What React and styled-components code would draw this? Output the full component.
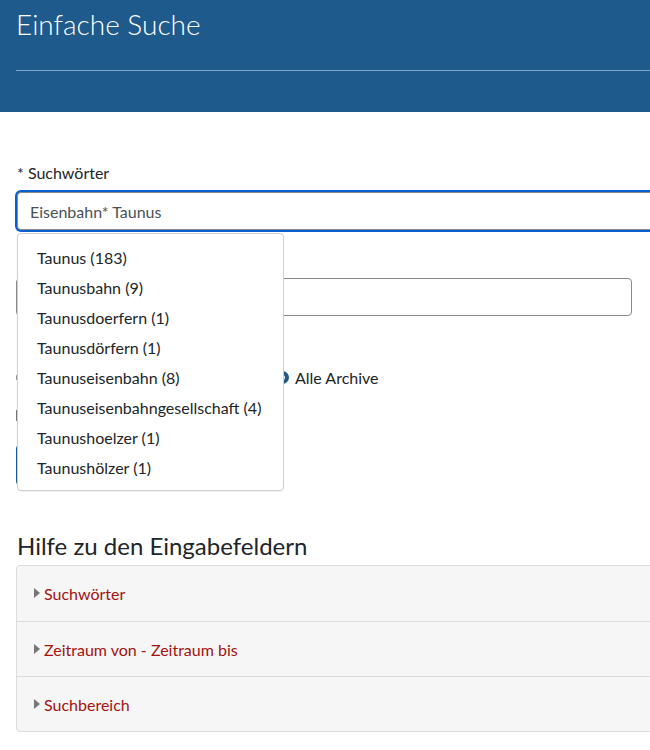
import React from "react";
import styled, { createGlobalStyle } from "styled-components";

const Global = createGlobalStyle`
  html, body { margin: 0; padding: 0; background: #fff; overflow: hidden; }
  body { font-family: "Segoe UI", Lato, "Noto Sans", sans-serif; color: #212529; }
  * { box-sizing: border-box; }
`;

const Page = styled.div`
  width: 720px;
`;

const Header = styled.header`
  background: #1f5a8c;
  height: 112px;
  padding: 6px 0 0 16px;
`;

const Title = styled.h1`
  margin: 0;
  font-weight: 300;
  font-size: 28px;
  line-height: 36px;
  color: #fff;
`;

const Rule = styled.hr`
  margin: 28px 0 0;
  border: 0;
  border-top: 1px solid #7fa6cf;
`;

const Main = styled.main`
  padding: 50px 0 0 16px;
`;

const Form = styled.form`
  position: relative;
  display: flex;
  flex-direction: column;
`;

const Label = styled.label`
  display: block;
  font-size: 16px;
  line-height: 22px;
  margin: 0 0 ${(p) => p.$mb || 8}px 1px;
`;

const Input = styled.input`
  display: block;
  width: ${(p) => p.$w || 704}px;
  height: 38px;
  border: 1px solid #8a8a8a;
  border-radius: 4px;
  padding: 0 12px;
  font: inherit;
  font-size: 16px;
  color: #495057;
  background: #fff;
  margin-left: ${(p) => (p.$focus ? 1 : 0)}px;
  box-shadow: ${(p) => (p.$focus ? "0 0 0 2px #0b5fd1" : "none")};
  outline: none;
`;

const Field = styled.div`
  margin-bottom: ${(p) => p.$mb || 0}px;
`;

const RadioRow = styled.div`
  display: flex;
  align-items: center;
  height: 22px;
  margin-top: 50px;
  font-size: 16px;
`;

const RadioItem = styled.label`
  display: flex;
  align-items: center;
  gap: 6px;
  width: ${(p) => p.$w || "auto"};
`;

const Radio = styled.span`
  width: 13px;
  height: 13px;
  border-radius: 50%;
  border: ${(p) => (p.$checked ? "4px solid #1f5a8c" : "1px solid #777")};
  background: #fff;
  flex: none;
`;

const CheckRow = styled.div`
  display: flex;
  align-items: center;
  gap: 6px;
  height: 22px;
  margin-top: 16px;
  font-size: 16px;
`;

const Box = styled.span`
  width: 13px;
  height: 13px;
  border: 1px solid #777;
  border-radius: 2px;
  flex: none;
`;

const Button = styled.button`
  align-self: flex-start;
  margin-top: 19px;
  height: 40px;
  width: 160px;
  background: #1f5a8c;
  color: #fff;
  border: 0;
  border-radius: 4px;
  font: inherit;
  font-size: 16px;
`;

const Dropdown = styled.ul`
  position: absolute;
  left: 1px;
  top: 71px;
  width: 267px;
  margin: 0;
  padding: 9px 0 7px;
  list-style: none;
  background: #fff;
  border: 1px solid #cfcfcf;
  border-radius: 4px;
  box-shadow: 0 1px 2px rgba(0, 0, 0, 0.06);
`;

const Option = styled.li`
  height: 30px;
  line-height: 29px;
  padding-left: 19px;
  font-size: 16px;
  color: #212529;
  white-space: nowrap;
`;

const HelpTitle = styled.h2`
  margin: 47px 0 5px 1px;
  font-size: 24px;
  font-weight: 400;
  line-height: 28px;
`;

const Accordion = styled.div`
  border: 1px solid #dcdcdc;
  border-radius: 4px;
  background: #f6f6f6;
  width: 704px;
`;

const Item = styled.div`
  height: 55px;
  display: flex;
  align-items: center;
  padding-left: 17px;
  border-top: ${(p) => (p.$first ? "0" : "1px solid #dcdcdc")};
  font-size: 16px;
  color: #a3120f;
`;

const Caret = styled.span`
  width: 0;
  height: 0;
  border-top: 5px solid transparent;
  border-bottom: 5px solid transparent;
  border-left: 6px solid #777;
  margin-right: 4px;
  margin-top: -1px;
`;

const suggestions = [
  "Taunus (183)",
  "Taunusbahn (9)",
  "Taunusdoerfern (1)",
  "Taunusdörfern (1)",
  "Taunuseisenbahn (8)",
  "Taunuseisenbahngesellschaft (4)",
  "Taunushoelzer (1)",
  "Taunushölzer (1)",
];

const help = ["Suchwörter", "Zeitraum von - Zeitraum bis", "Suchbereich"];

export default function App() {
  return (
    <Page>
      <Global />
      <Header>
        <Title>Einfache Suche</Title>
        <Rule />
      </Header>
      <Main>
        <Form onSubmit={(e) => e.preventDefault()}>
          <Field $mb={14}>
            <Label $mb={8}>* Suchwörter</Label>
            <Input $focus defaultValue="Eisenbahn* Taunus" $w={703} />
          </Field>
          <Field>
            <Label $mb={12}>Zeitraum von - Zeitraum bis</Label>
            <Input $w={616} />
          </Field>
          <RadioRow>
            <RadioItem $w="260px">
              <Radio />
              Ausgewählte Archive
            </RadioItem>
            <RadioItem>
              <Radio $checked />
              Alle Archive
            </RadioItem>
          </RadioRow>
          <CheckRow>
            <Box />
            Nur digitalisierte Archivalien
          </CheckRow>
          <Button type="submit">Suchen</Button>
          <Dropdown>
            {suggestions.map((s) => (
              <Option key={s}>{s}</Option>
            ))}
          </Dropdown>
        </Form>
        <HelpTitle>Hilfe zu den Eingabefeldern</HelpTitle>
        <Accordion>
          {help.map((h, i) => (
            <Item key={h} $first={i === 0}>
              <Caret />
              {h}
            </Item>
          ))}
        </Accordion>
      </Main>
    </Page>
  );
}
